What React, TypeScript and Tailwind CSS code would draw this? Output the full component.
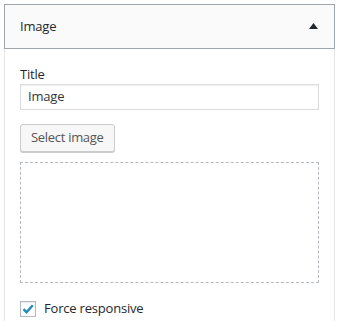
import React from "react";

export default function App() {
  return (
    <div
      className="w-[341px] h-[321px] bg-white overflow-hidden pt-[4px] pl-[4px]"
      style={{ fontFamily: '"Open Sans", "Noto Sans", sans-serif' }}
    >
      <div className="w-[331px]">
        <div className="h-[45px] border border-[#a0a5aa] bg-[#fafafa] flex items-center justify-between pl-[15px] pr-[16px]">
          <span className="text-[13px] text-[#23282d] tracking-[-0.2px]">Image</span>
          <svg width="9" height="6" viewBox="0 0 9 6" className="mt-[-2px]">
            <polygon points="4.5,0 9,6 0,6" fill="#23282d" />
          </svg>
        </div>
        <div className="border-x border-[#e5e5e5] px-[15px] pt-[16px] h-[300px]">
          <div className="text-[13px] text-[#23282d] leading-[18px] tracking-[-0.2px]">Title</div>
          <div className="mt-[1px] h-[26px] border border-[#ddd] shadow-[inset_0_1px_2px_rgba(0,0,0,0.07)] flex items-center px-[7px] text-[13px] text-[#32373c] tracking-[-0.2px]">
            Image
          </div>
          <div className="mt-[14px] inline-flex h-[28px] items-center px-[10px] border border-[#ccc] rounded-[3px] bg-[#f7f7f7] shadow-[0_1px_0_#ccc] text-[13px] text-[#555] tracking-[-0.3px]">
            Select image
          </div>
          <div className="mt-[10px] h-[121px] border border-dashed border-[#b4b9be]" />
          <div className="mt-[16px] flex items-center gap-[8px]">
            <div className="w-[16px] h-[16px] border border-[#b4b9be] bg-white shadow-[inset_0_1px_2px_rgba(0,0,0,0.1)] flex items-center justify-center">
              <svg width="14" height="14" viewBox="0 0 14 14">
                <path d="M2.5 7.2 L5.5 10.3 L11.8 3.2" fill="none" stroke="#1e8cbe" strokeWidth="2.4" />
              </svg>
            </div>
            <span className="text-[13px] text-[#23282d] tracking-[-0.2px]">Force responsive</span>
          </div>
        </div>
      </div>
    </div>
  );
}
